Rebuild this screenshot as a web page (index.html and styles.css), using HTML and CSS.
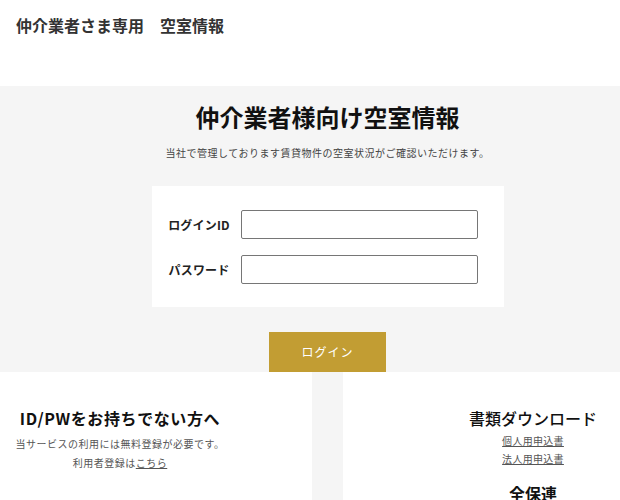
FILE: index.html
```html
<!DOCTYPE html>
<html lang="ja">
<head>
    <meta charset="utf-8">
    <link rel="stylesheet" href="styles.css">
</head>
<body>
<div class="header">
    <h1 class="site-title">仲介業者さま専用　空室情報</h1>
</div>
<div class="login-area">
    <div class="login-inner">
        <h2 class="login-title">仲介業者様向け空室情報</h2>
        <p class="login-lead">当社で管理しております賃貸物件の空室状況がご確認いただけます。</p>
        <form class="login-box">
            <label class="login-label" for="loginId">ログインID</label>
            <input class="login-input" type="text" id="loginId">
            <label class="login-label" for="loginPw">パスワード</label>
            <input class="login-input" type="password" id="loginPw">
        </form>
        <a href="#" class="login-btn">ログイン</a>
    </div>
</div>
<div class="info">
    <div class="info-left">
        <h3 class="info-title">ID/PWをお持ちでない方へ</h3>
        <p class="info-text">当サービスの利用には無料登録が必要です。</p>
        <p class="info-text">利用者登録は<a href="#">こちら</a></p>
    </div>
    <div class="info-gap"></div>
    <div class="info-right">
        <h3 class="info-title info-title--normal">書類ダウンロード</h3>
        <p class="info-link"><a href="#">個人用申込書</a></p>
        <p class="info-link"><a href="#">法人用申込書</a></p>
        <h3 class="info-title info-title--sub">全保連</h3>
    </div>
</div>
</body>
</html>
```

FILE: styles.css
```css
* {
    margin: 0;
    padding: 0;
    box-sizing: border-box;
}
body {
    font-family: "Noto Sans CJK JP", "Noto Sans", sans-serif;
    color: #333;
    background-color: #fff;
    overflow: hidden;
}
a {
    color: inherit;
}
.header {
    height: 86px;
    padding: 15px 0 0 16px;
}
.site-title {
    font-size: 16px;
    line-height: 20px;
    font-weight: bold;
    color: #333;
}
.login-area {
    background-color: #f5f5f5;
}
.login-inner {
    padding: 15px 0 0 35px;
    text-align: center;
}
.login-title {
    font-size: 24px;
    line-height: 32px;
    font-weight: bold;
    color: #111;
}
.login-lead {
    margin-top: 12px;
    font-size: 10px;
    line-height: 16px;
    color: #444;
    letter-spacing: 0.5px;
}
.login-box {
    width: 352px;
    margin: 25px auto 0;
    padding: 24px 26px 23px 11px;
    background-color: #fff;
    display: grid;
    grid-template-columns: 73px 237px;
    column-gap: 5px;
    row-gap: 16px;
    align-items: center;
}
.login-label {
    font-size: 12px;
    font-weight: bold;
    color: #222;
    text-align: center;
    letter-spacing: 0.2px;
}
.login-input {
    height: 29px;
    border: 1px solid #767676;
    border-radius: 2px;
    background-color: #fff;
}
.login-btn {
    display: block;
    width: 117px;
    height: 40px;
    margin: 25px auto 0;
    background-color: #c29d33;
    color: #fff;
    font-size: 12px;
    line-height: 40px;
    letter-spacing: 1px;
    text-decoration: none;
}
.info {
    display: grid;
    grid-template-columns: 312px 31px 1fr;
    height: 128px;
    text-align: center;
}
.info-gap {
    background-color: #f5f5f5;
}
.info-left {
    padding: 34px 72px 0 0;
}
.info-right {
    padding: 34px 0 0 103px;
}
.info-title {
    font-size: 16px;
    line-height: 24px;
    font-weight: bold;
    color: #111;
}
.info-left .info-title {
    margin-bottom: 4px;
    letter-spacing: 0.6px;
}
.info-title--normal {
    font-weight: 500;
}
.info-title--sub {
    margin-top: 13px;
}
.info-text {
    font-size: 10px;
    line-height: 19px;
    color: #555;
    letter-spacing: 0.5px;
}
.info-link {
    font-size: 10px;
    line-height: 18px;
    color: #555;
    letter-spacing: 0.3px;
}
.info-right .info-title--normal {
    margin-bottom: 2px;
}
```
